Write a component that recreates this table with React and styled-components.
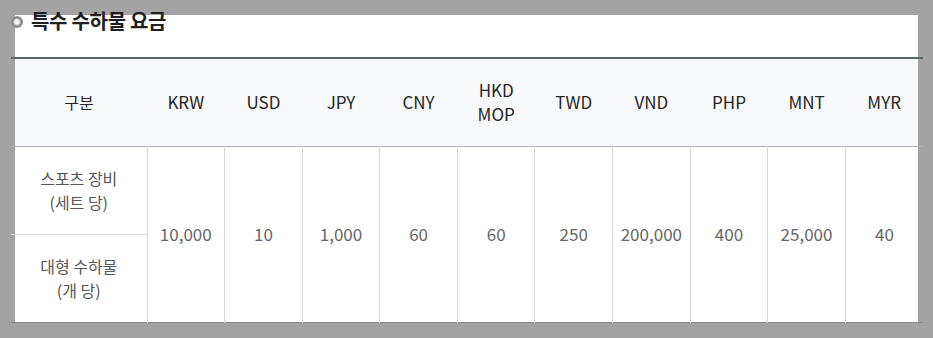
import React from "react";
import styled, { createGlobalStyle } from "styled-components";

const GlobalStyle = createGlobalStyle`
  html, body {
    margin: 0;
    padding: 0;
    background: #a3a3a3;
  }
  body {
    font-family: "Noto Sans CJK KR", "Noto Sans", sans-serif;
  }
`;

const Panel = styled.section`
  margin: 15px 0 0 15px;
  width: 903px;
  height: 308px;
  background: #ffffff;
`;

const Title = styled.h3`
  display: flex;
  align-items: center;
  gap: 8px;
  margin: 0 0 0 -4px;
  position: relative;
  top: -8px;
  height: 26px;
  font-size: 20px;
  font-weight: 700;
  color: #1f1f1f;
  letter-spacing: -0.3px;
`;

const Bullet = styled.span`
  width: 12px;
  height: 12px;
  margin-top: 4px;
  border-radius: 50%;
  flex: none;
  background: radial-gradient(circle, #f6f6f6 0 2px, #c8c8c8 3px, #828282 4.5px, #979797 6px);
`;

const TableWrap = styled.div`
  margin: 16px -5px 0 -4px;
`;

const Table = styled.table`
  width: 912px;
  border-collapse: collapse;
  table-layout: fixed;
  border-top: 2px solid #5c636a;
  border-bottom: 1px solid #8a8a8a;
`;

const HeadRow = styled.tr`
  height: 88px;
  background: linear-gradient(
    to right,
    transparent 4px,
    #f7f8fa 4px,
    #f7f8fa calc(100% - 5px),
    transparent calc(100% - 5px)
  );
  border-bottom: 1px solid #aeb1b5;
`;

const Th = styled.th`
  font-size: ${(p) => (p.$ko ? "16px" : "17px")};
  font-weight: 400;
  line-height: 24px;
  color: #262626;
  text-align: center;
  padding: 0;
`;

const Td = styled.td`
  height: 87px;
  padding: 0;
  font-size: ${(p) => (p.$label ? "16px" : "17px")};
  line-height: 24px;
  color: ${(p) => (p.$label ? "#555" : "#666")};
  text-align: center;
  border-left: ${(p) => (p.$label ? "none" : "1px solid #d8d8d8")};
  border-bottom: ${(p) => (p.$split ? "1px solid #dcdcdc" : "none")};
`;

const currencies = ["KRW", "USD", "JPY", "CNY", "HKD\nMOP", "TWD", "VND", "PHP", "MNT", "MYR"];
const fees = ["10,000", "10", "1,000", "60", "60", "250", "200,000", "400", "25,000", "40"];

const Lines = ({ text }) =>
  text.split("\n").map((line, i) => (
    <React.Fragment key={i}>
      {i > 0 && <br />}
      {line}
    </React.Fragment>
  ));

export default function App() {
  return (
    <>
      <GlobalStyle />
      <Panel>
        <Title>
          <Bullet />
          특수 수하물 요금
        </Title>
        <TableWrap>
          <Table>
            <colgroup>
              <col style={{ width: 136 }} />
              {currencies.map((c) => (
                <col key={c} />
              ))}
            </colgroup>
            <thead>
              <HeadRow>
                <Th $ko>구분</Th>
                {currencies.map((c) => (
                  <Th key={c}>
                    <Lines text={c} />
                  </Th>
                ))}
              </HeadRow>
            </thead>
            <tbody>
              <tr>
                <Td $label $split>
                  <Lines text={"스포츠 장비\n(세트 당)"} />
                </Td>
                {fees.map((f, i) => (
                  <Td key={i} rowSpan={2}>
                    {f}
                  </Td>
                ))}
              </tr>
              <tr>
                <Td $label>
                  <Lines text={"대형 수하물\n(개 당)"} />
                </Td>
              </tr>
            </tbody>
          </Table>
        </TableWrap>
      </Panel>
    </>
  );
}
